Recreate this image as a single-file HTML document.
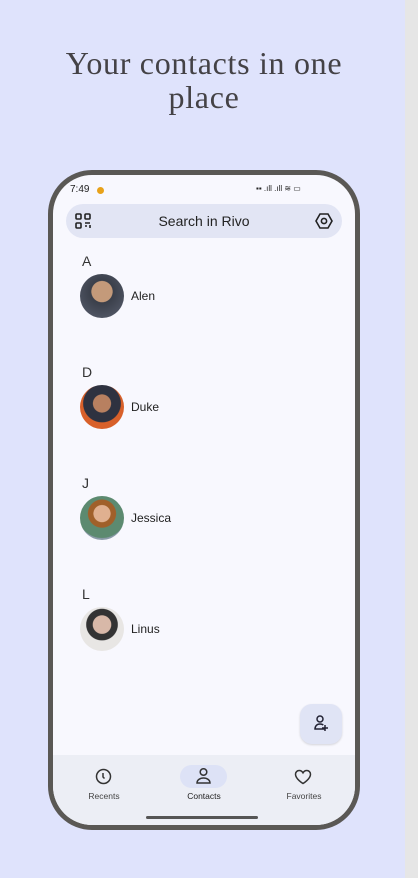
<!DOCTYPE html>
<html><head><style>
*{margin:0;padding:0;box-sizing:border-box}
body{width:418px;height:878px;background:#dfe3fc;font-family:"Liberation Sans",sans-serif;position:relative;overflow:hidden}
.strip{position:absolute;right:0;top:0;width:13px;height:878px;background:#e6e6e6}
h1{position:absolute;left:0;width:408px;top:46px;text-align:center;font-family:"Liberation Serif",serif;font-weight:normal;font-size:32px;line-height:34px;color:#444246;letter-spacing:.7px}
.phone{position:absolute;left:48px;top:170px;width:312px;height:660px;border:5px solid #5a5855;border-radius:44px;background:#f8f8fe;overflow:hidden}
.abs{position:absolute}
.search{left:13px;top:29px;width:276px;height:34px;border-radius:17px;background:#e2e5f4}
.st{font-size:10px;color:#222}
.letter{left:29px;font-size:14px;color:#333}
.av{left:27px;width:44px;height:44px;border-radius:50%}
.name{left:78px;font-size:12px;color:#222}
.nav{left:0;top:580px;width:302px;height:80px;background:#eceef5}
.lab{font-size:8.5px;color:#444;width:80px;text-align:center}
</style></head><body>
<div class="strip"></div>
<h1>Your contacts in one<br>place</h1>
<div class="phone">
 <div class="abs st" style="left:17px;top:9px">7:49</div>
 <div class="abs" style="left:44px;top:12px;width:7px;height:7px;border-radius:50%;background:#e8a21a"></div>
 <div class="abs st" style="left:203px;top:9px;font-size:8px">▪▪ .ıll .ıll ≋ ▭</div>
 <div class="abs search"></div>
 <svg class="abs" style="left:22px;top:38px" width="16" height="16" viewBox="0 0 16 16" fill="none" stroke="#222" stroke-width="1.6"><rect x="1" y="1" width="5" height="5" rx="1"/><rect x="10" y="1" width="5" height="5" rx="1"/><rect x="1" y="10" width="5" height="5" rx="1"/><path d="M10 10h5M10 13h2M15 12v3"/></svg>
 <div class="abs" style="left:0;width:302px;top:38px;text-align:center;font-size:14px;color:#222">Search in Rivo</div>
 <svg class="abs" style="left:262px;top:37px" width="18" height="18" viewBox="0 0 18 18" fill="none" stroke="#222" stroke-width="1.6"><path d="M5 2h8l4 7-4 7H5L1 9z"/><circle cx="9" cy="9" r="2.6"/></svg>
 <div class="abs letter" style="top:78px">A</div>
 <div class="abs av" style="top:99px;background:radial-gradient(circle at 50% 40%,#c49a7a 0 30%,#3a3f4a 32%,#5a6070)"></div>
 <div class="abs name" style="top:114px">Alen</div>
 <div class="abs letter" style="top:189px">D</div>
 <div class="abs av" style="top:210px;background:radial-gradient(circle at 50% 42%,#b88060 0 26%,#2e3240 28% 55%,#d8602a 57%)"></div>
 <div class="abs name" style="top:225px">Duke</div>
 <div class="abs letter" style="top:300px">J</div>
 <div class="abs av" style="top:321px;background:radial-gradient(circle at 50% 40%,#e0b090 0 24%,#a0602a 26% 40%,#5c8a70 42% 70%,#8a9aa8 72%)"></div>
 <div class="abs name" style="top:336px">Jessica</div>
 <div class="abs letter" style="top:411px">L</div>
 <div class="abs av" style="top:432px;background:radial-gradient(circle at 50% 40%,#d8b8a8 0 26%,#333 28% 45%,#e8e6e4 47%)"></div>
 <div class="abs name" style="top:447px">Linus</div>
 <div class="abs" style="left:247px;top:529px;width:42px;height:40px;border-radius:12px;background:#e0e4f5;box-shadow:0 1px 2px rgba(0,0,0,.15)"></div>
 <svg class="abs" style="left:259px;top:539px" width="18" height="18" viewBox="0 0 18 18" fill="none" stroke="#223" stroke-width="1.5"><circle cx="8" cy="5" r="3"/><path d="M13 15H3c0-3 2-5 5-5 1.5 0 2.5.4 3.3 1M13 11v6M10 14h6"/></svg>
 <div class="abs nav"></div>
 <div class="abs" style="left:127px;top:590px;width:47px;height:23px;border-radius:12px;background:#dde2f6"></div>
 <svg class="abs" style="left:42px;top:593px" width="17" height="17" viewBox="0 0 17 17" fill="none" stroke="#333" stroke-width="1.5"><circle cx="8.5" cy="8.5" r="7"/><path d="M8 5v4l1.5 1.5"/></svg>
 <svg class="abs" style="left:142px;top:592px" width="17" height="18" viewBox="0 0 17 18" fill="none" stroke="#333" stroke-width="1.5"><circle cx="8.5" cy="5" r="3.3"/><path d="M2 16c0-3 3-5 6.5-5S15 13 15 16z"/></svg>
 <svg class="abs" style="left:241px;top:594px" width="18" height="16" viewBox="0 0 18 16" fill="none" stroke="#333" stroke-width="1.5"><path d="M9 14.5S1.5 10 1.5 5.2C1.5 3 3.2 1.5 5.2 1.5c1.6 0 3 1 3.8 2.3C9.8 2.5 11.2 1.5 12.8 1.5c2 0 3.7 1.5 3.7 3.7C16.5 10 9 14.5 9 14.5z"/></svg>
 <div class="abs lab" style="left:11px;top:616px">Recents</div>
 <div class="abs lab" style="left:111px;top:616px;color:#222">Contacts</div>
 <div class="abs lab" style="left:211px;top:616px">Favorites</div>
 <div class="abs" style="left:93px;top:641px;width:112px;height:3px;border-radius:2px;background:#555"></div>
</div>
</body></html>
